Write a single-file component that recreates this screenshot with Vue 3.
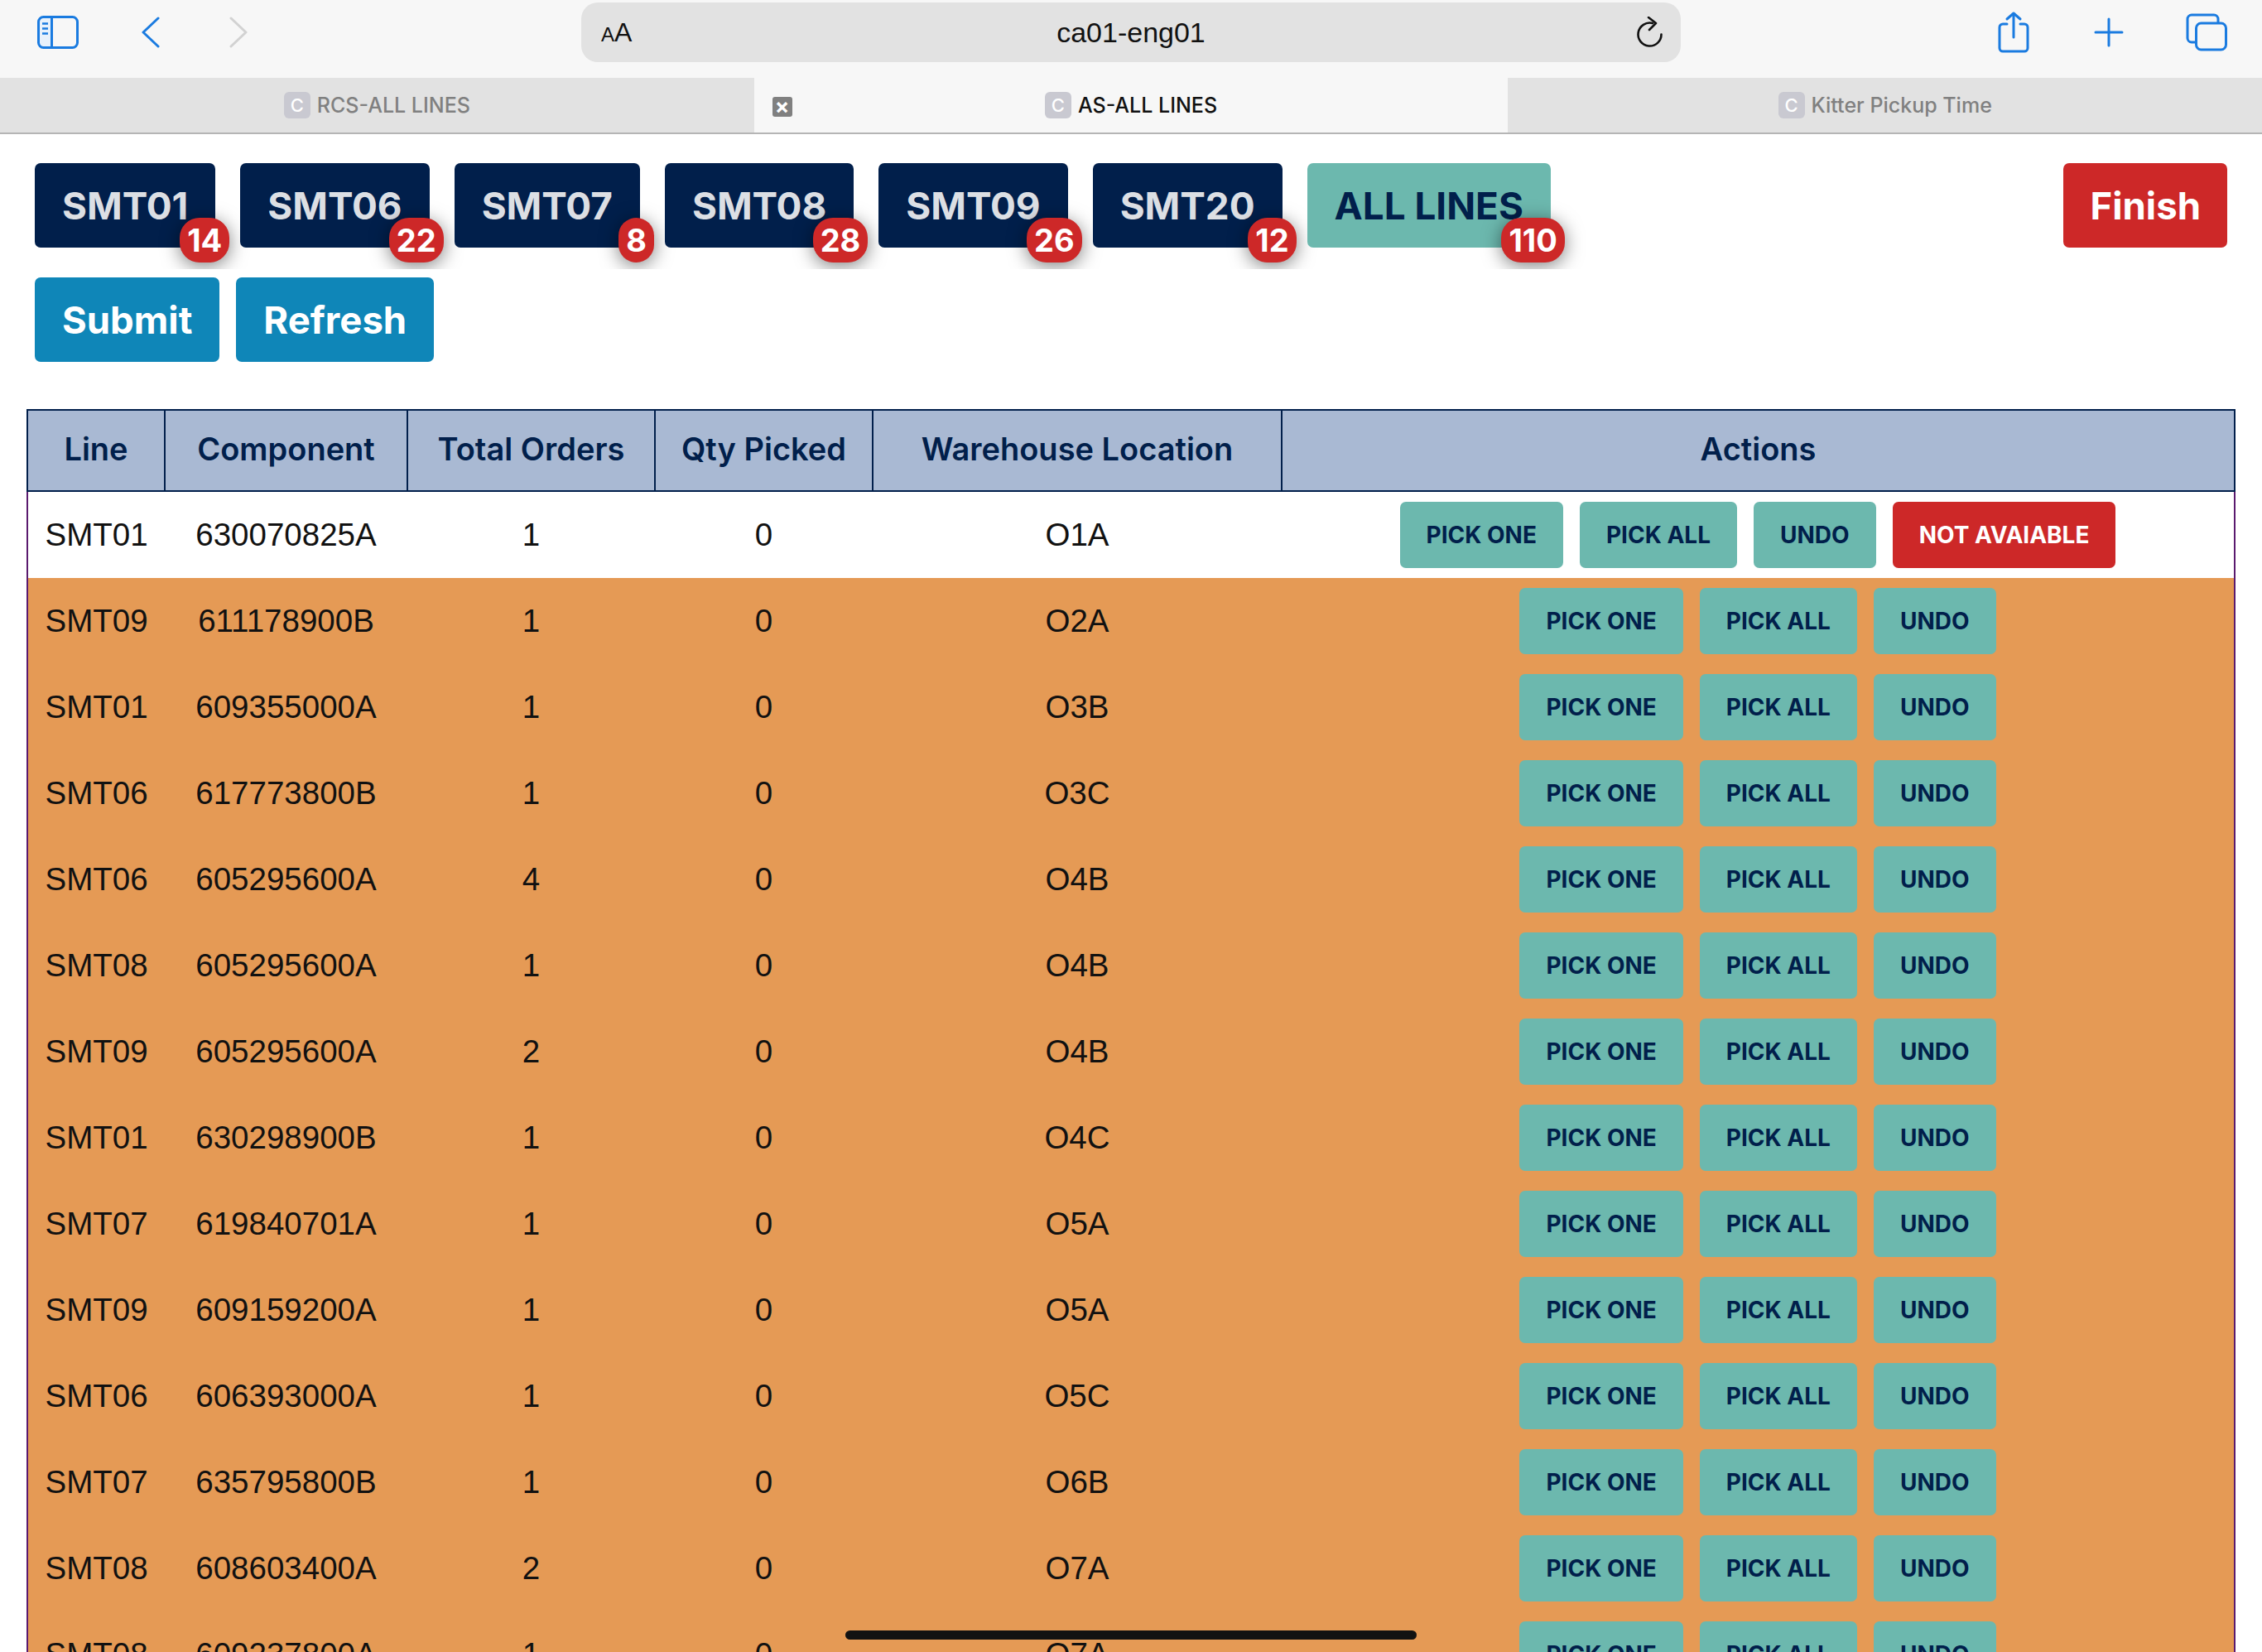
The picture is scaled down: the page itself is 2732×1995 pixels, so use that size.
<template>
  <div class="page">
    <!-- safari chrome -->
    <div class="toolbar">
      <div class="tool-left">
        <svg class="ico-sidebar" width="50" height="40" viewBox="0 0 50 40" fill="none" stroke="#1a7be0" stroke-width="3">
          <path d="M6 2h12v36H6a4 4 0 0 1-4-4V6a4 4 0 0 1 4-4z" fill="#e8f1fb" stroke="none" />
          <rect x="1.5" y="1.5" width="47" height="37" rx="6" />
          <path d="M17.5 1.5v37" />
          <path d="M6 9.5h7M6 15.5h7M6 21.5h7" stroke-width="2.4" />
        </svg>
        <svg class="ico-back" width="24" height="38" viewBox="0 0 24 38" fill="none" stroke="#1a7be0" stroke-width="3" stroke-linecap="round" stroke-linejoin="round">
          <path d="M21 2 3 19l18 17" />
        </svg>
        <svg class="ico-fwd" width="24" height="38" viewBox="0 0 24 38" fill="none" stroke="#d2d2d2" stroke-width="3" stroke-linecap="round" stroke-linejoin="round">
          <path d="M3 2l18 17L3 36" />
        </svg>
      </div>
      <div class="address">
        <span class="aa"><small>A</small>A</span>
        <span class="host">ca01-eng01</span>
        <svg width="32" height="38" viewBox="0 0 32 38" fill="none" stroke="#111" stroke-width="2.6" stroke-linecap="round" stroke-linejoin="round">
          <path d="M30.5 21.5a14 14 0 1 1-10.5-13.5" />
          <path d="M15 1l9 7-8 8" />
        </svg>
      </div>
      <div class="tool-right">
        <svg width="38" height="50" viewBox="0 0 38 50" fill="none" stroke="#1a7be0" stroke-width="3" stroke-linecap="round" stroke-linejoin="round">
          <path d="M11 15H6a4 4 0 0 0-4 4v25a4 4 0 0 0 4 4h26a4 4 0 0 0 4-4V19a4 4 0 0 0-4-4h-5" />
          <path d="M19 31V2M11 9l8-7 8 7" />
        </svg>
        <svg class="ico-plus" width="36" height="36" viewBox="0 0 36 36" fill="none" stroke="#1a7be0" stroke-width="3" stroke-linecap="round">
          <path d="M18 2v32M2 18h32" />
        </svg>
        <svg width="50" height="46" viewBox="0 0 50 46" fill="none" stroke="#1a7be0" stroke-width="3">
          <path d="M11 35H7a5 5 0 0 1-5-5V7a5 5 0 0 1 5-5h27a5 5 0 0 1 5 5v4" />
          <rect x="12.5" y="12" width="36" height="32" rx="6" />
        </svg>
      </div>
    </div>
    <div class="tabs">
      <div v-for="t in tabs" :key="t.title" class="tab" :class="{ on: t.active }">
        <span v-if="t.active" class="tab-x">×</span>
        <span class="fav">C</span>
        <span>{{ t.title }}</span>
      </div>
    </div>

    <!-- app -->
    <div class="top-row">
      <div class="lines">
        <button v-for="l in lines" :key="l.name" class="line-btn" :class="{ all: l.name === 'ALL LINES' }">
          {{ l.name }}
          <span class="badge">{{ l.count }}</span>
        </button>
      </div>
      <button class="finish">Finish</button>
    </div>
    <div class="second-row">
      <button class="blue">Submit</button>
      <button class="blue">Refresh</button>
    </div>

    <table class="orders">
      <colgroup>
        <col class="c1" /><col class="c2" /><col class="c3" /><col class="c4" /><col class="c5" /><col />
      </colgroup>
      <thead>
        <tr>
          <th>Line</th>
          <th>Component</th>
          <th>Total Orders</th>
          <th>Qty Picked</th>
          <th>Warehouse Location</th>
          <th>Actions</th>
        </tr>
      </thead>
      <tbody>
        <tr v-for="(r, i) in rows" :key="i" :class="{ late: i > 0 }">
          <td>{{ r[0] }}</td>
          <td>{{ r[1] }}</td>
          <td>{{ r[2] }}</td>
          <td>0</td>
          <td>{{ r[3] }}</td>
          <td>
            <div class="actions">
              <button class="act">PICK ONE</button>
              <button class="act">PICK ALL</button>
              <button class="act">UNDO</button>
              <button v-if="i === 0" class="act na">NOT AVAIABLE</button>
            </div>
          </td>
        </tr>
      </tbody>
    </table>

    <div class="home-bar"></div>
  </div>
</template>

<script setup>
const tabs = [
  { title: 'RCS-ALL LINES' },
  { title: 'AS-ALL LINES', active: true },
  { title: 'Kitter Pickup Time' },
]

const lines = [
  { name: 'SMT01', count: 14 },
  { name: 'SMT06', count: 22 },
  { name: 'SMT07', count: 8 },
  { name: 'SMT08', count: 28 },
  { name: 'SMT09', count: 26 },
  { name: 'SMT20', count: 12 },
  { name: 'ALL LINES', count: 110 },
]

const rows = [
  ['SMT01', '630070825A', 1, 'O1A'],
  ['SMT09', '611178900B', 1, 'O2A'],
  ['SMT01', '609355000A', 1, 'O3B'],
  ['SMT06', '617773800B', 1, 'O3C'],
  ['SMT06', '605295600A', 4, 'O4B'],
  ['SMT08', '605295600A', 1, 'O4B'],
  ['SMT09', '605295600A', 2, 'O4B'],
  ['SMT01', '630298900B', 1, 'O4C'],
  ['SMT07', '619840701A', 1, 'O5A'],
  ['SMT09', '609159200A', 1, 'O5A'],
  ['SMT06', '606393000A', 1, 'O5C'],
  ['SMT07', '635795800B', 1, 'O6B'],
  ['SMT08', '608603400A', 2, 'O7A'],
  ['SMT08', '609237800A', 1, 'O7A'],
]
</script>

<style>
html, body {
  margin: 0;
  height: 1995px;
  overflow: hidden;
  background: #fff;
}
</style>

<style scoped>
.page {
  position: relative;
  height: 1995px;
  overflow: hidden;
  font-family: "Liberation Sans", Arial, sans-serif;
  color: #111;
}

button {
  font-family: Inter, "Liberation Sans", sans-serif;
  font-weight: 700;
  border: none;
  cursor: pointer;
}

.toolbar {
  height: 94px;
  box-sizing: border-box;
  background: #f7f7f7;
  display: grid;
  grid-template-columns: 702px 1328px 1fr;
  align-items: start;
}

.tool-left {
  display: flex;
  align-items: center;
  height: 78px;
  padding-left: 45px;
}

.ico-back {
  margin-left: 75px;
}

.ico-fwd {
  margin-left: 82px;
}

.address {
  margin-top: 3px;
  height: 72px;
  border-radius: 20px;
  background: #e2e2e2;
  display: flex;
  align-items: center;
  justify-content: space-between;
  padding: 0 22px 0 24px;
  position: relative;
}

.aa {
  font-size: 32px;
  color: #111;
}

.aa small {
  font-size: 24px;
}

.host {
  position: absolute;
  left: 0;
  right: 0;
  text-align: center;
  font-size: 34px;
}

.address svg {
  position: relative;
}

.tool-right {
  display: flex;
  align-items: center;
  height: 78px;
  padding-left: 383px;
}

.ico-plus {
  margin: 0 75px 0 78px;
}

.tabs {
  height: 68px;
  box-sizing: border-box;
  display: grid;
  grid-template-columns: repeat(3, 1fr);
  border-bottom: 2px solid #b5b5b5;
}

.tab {
  position: relative;
  background: #e2e2e2;
  display: flex;
  align-items: center;
  justify-content: center;
  gap: 8px;
  font-family: Inter, "Liberation Sans", sans-serif;
  font-size: 25px;
  font-weight: 500;
  color: #808080;
}

.tab.on {
  background: #f7f7f7;
  color: #111;
}

.fav {
  width: 32px;
  height: 32px;
  border-radius: 6px;
  background: #c9c9d1;
  color: #fff;
  font-size: 22px;
  display: flex;
  align-items: center;
  justify-content: center;
}

.tab-x {
  position: absolute;
  left: 22px;
  top: 23px;
  width: 24px;
  height: 24px;
  border-radius: 3px;
  background: #808080;
  color: #fff;
  font-size: 26px;
  font-weight: 700;
  line-height: 23px;
  text-align: center;
}

.top-row {
  display: flex;
  justify-content: space-between;
  padding: 35px 42px 0;
}

.lines {
  display: flex;
  gap: 30px;
  padding-bottom: 26px;
  /* the badge shadows stop dead at the bottom of this row in the app */
  clip-path: inset(-60px -60px 0 -60px);
}

.line-btn,
.finish,
.blue {
  height: 102px;
  padding: 0 33px;
  border-radius: 7px;
  font-size: 45.5px;
  white-space: nowrap;
}

.line-btn {
  position: relative;
  font-size: 45.8px;
  background: #011f4b;
  color: #dcdfe4;
}

.line-btn.all {
  background: #6cb8ae;
  color: #011f4b;
}

.badge {
  position: absolute;
  right: -17px;
  bottom: -18px;
  height: 54px;
  padding: 0 9px;
  border-radius: 24px;
  background: #cd2828;
  color: #fff;
  font-size: 38px;
  line-height: 54px;
  box-shadow: 0 4px 22px rgba(0, 0, 0, 0.5);
}

.finish {
  padding: 0 32px;
  background: #cd2828;
  color: #fff;
}

.second-row {
  display: flex;
  gap: 20px;
  padding: 10px 42px 0;
}

.blue {
  background: #0f86b8;
  color: #fff;
}

.orders {
  margin: 57px 0 0 32px;
  width: 2668px;
  table-layout: fixed;
  border-collapse: collapse;
  border-left: 2px solid #5a1a6e;
  border-right: 2px solid #5a1a6e;
}

.c1 { width: 166px; }
.c2 { width: 293px; }
.c3 { width: 299px; }
.c4 { width: 263px; }
.c5 { width: 494px; }

th {
  height: 92px;
  padding: 0 0 4px;
  background: #a9b9d3;
  color: #011f4b;
  font-family: Inter, "Liberation Sans", sans-serif;
  font-size: 38px;
  font-weight: 600;
  border: 2px solid #011f4b;
}

td {
  height: 104px;
  padding: 0;
  text-align: center;
  font-size: 38.5px;
  color: #111;
}

.late td {
  background: #e59a55;
}

.actions {
  display: flex;
  justify-content: center;
  gap: 20px;
}

.act {
  height: 80px;
  padding: 0 32px;
  border-radius: 7px;
  background: #6cb8ae;
  color: #011f4b;
  font-size: 28px;
}

.act.na {
  background: #cd2828;
  color: #fff;
}

.home-bar {
  position: absolute;
  left: 1021px;
  top: 1969px;
  width: 690px;
  height: 11px;
  border-radius: 6px;
  background: #121212;
}
</style>
